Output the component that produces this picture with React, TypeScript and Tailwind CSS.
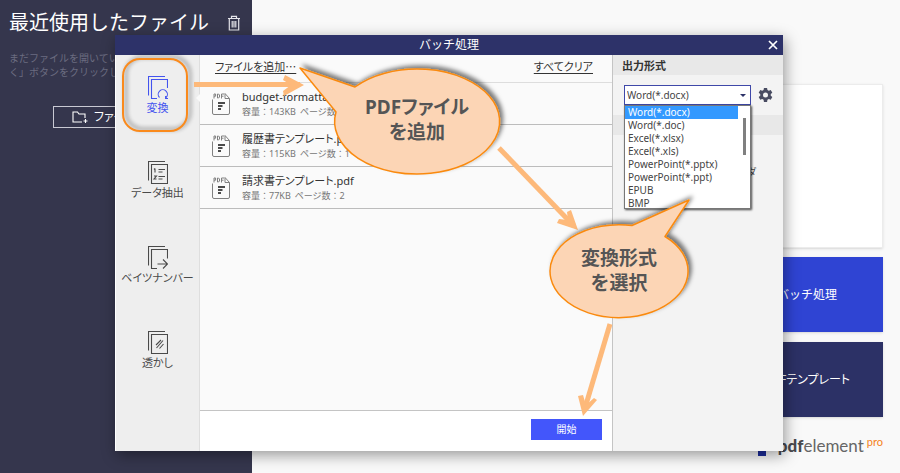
import { useState } from "react";
import type { ReactNode } from "react";

const formats = [
  "Word(*.docx)",
  "Word(*.doc)",
  "Excel(*.xlsx)",
  "Excel(*.xls)",
  "PowerPoint(*.pptx)",
  "PowerPoint(*.ppt)",
  "EPUB",
  "BMP",
];

const files = [
  { name: "budget-formattad.pdf", size: "143KB", pages: 2 },
  { name: "履歴書テンプレート.pdf", size: "115KB", pages: 1 },
  { name: "請求書テンプレート.pdf", size: "77KB", pages: 2 },
];

function PagesIcon({ front, children }: { front: string; children: ReactNode }) {
  return (
    <svg width="20" height="24" viewBox="0 0 20 24" fill="none" stroke="currentColor" strokeWidth="1.1">
      <path d="M.5 19.500V.5h16.500" />
      <path d={front} />
      {children}
    </svg>
  );
}

const tabs = [
  {
    label: "変換",
    icon: (
      <PagesIcon front="M9 22.500H3.500V3.500H19.500V12">
        <path d="M11.500 21.500a4.600 4.600 0 1 1 6.600 0M20 22.500h-2.400v-2.500" />
      </PagesIcon>
    ),
  },
  {
    label: "データ抽出",
    icon: (
      <PagesIcon front="M3.500 3.500h16v19h-16z">
        <path d="M7 7.500v4M6 8.500l1-1M6 15h2.500L6 18h2.500M10.500 8.500H17M10.500 11h4M10.500 15.500H17M10.500 18h4" />
      </PagesIcon>
    ),
  },
  {
    label: "ベイツナンバー",
    icon: (
      <PagesIcon front="M9 22.500H3.500v-19h16v9">
        <path d="M9.500 18h9.500M15 13.500l4.500 4.500-4.500 4.500" />
      </PagesIcon>
    ),
  },
  {
    label: "透かし",
    icon: (
      <PagesIcon front="M3.500 3.500h16v19h-16z">
        <path d="M8 14l5-5M8.500 17l6.500-7.500M11.500 17.500l4-4.500" />
      </PagesIcon>
    ),
  },
];

function PdfIcon() {
  return (
    <svg width="18" height="22" viewBox="0 0 18 22" fill="none" stroke="#808080" strokeWidth="1">
      <path d="M.5 6.500V20a1.500 1.500 0 0 0 1.500 1.500h14a1.500 1.500 0 0 0 1.500-1.500V5.500l-4.500-5v5h4.500" />
      <path d="M2 5.500V1h1.600v2.200H2M5.500 1v4h1l1-1V2l-1-1zM9.500 5.500V1H12M9.500 3.200h2" />
      <path d="M6 10h7M6 13h4.500M6 16h3" stroke="#4b4b4b" strokeWidth="2.200" />
    </svg>
  );
}

function Gear() {
  return (
    <svg width="15" height="15" viewBox="0 0 24 24" fill="#484b61">
      <path
        fillRule="evenodd"
        d="M9.500 0h5l.6 3.300 2.200 1.200 3.100-1.200 2.500 4.200-2.500 2.200v2.600l2.500 2.200-2.500 4.300-3.100-1.200-2.200 1.300-.6 3.300h-5l-.6-3.300-2.200-1.300-3.100 1.200-2.500-4.300 2.500-2.200V9.700L1.100 7.500l2.500-4.200 3.100 1.200 2.200-1.200zM12 7a4 4 0 1 0 0 8 4 4 0 0 0 0-8z"
      />
    </svg>
  );
}

function Home() {
  return (
    <div className="flex min-h-screen bg-[#f9f9f9]">
      <aside className="w-[252px] shrink-0 bg-[#35364d] px-[9px] pt-[9px]">
        <div className="flex items-center justify-between pr-[2px]">
          <h1 className="text-xl leading-7 text-white">最近使用したファイル</h1>
          <button type="button" aria-label="履歴を削除" className="text-[#e4e4ea]">
            <svg width="14" height="16" viewBox="0 0 14 16" fill="none" stroke="currentColor" strokeWidth="1.200">
              <path d="M1 3.500h12M4.500 3.500V1.300h5v2.200M2.300 3.500V15h9.400V3.500M5.200 6v6.500M7 6v6.500M8.800 6v6.500" />
            </svg>
          </button>
        </div>
        <p className="mt-[14px] text-[10px] leading-[14px] text-[#6b6c80]">
          まだファイルを開いていません。「ファイルを
          <br />
          く」ボタンをクリックしてください。
        </p>
        <button
          type="button"
          className="mx-auto mt-[27px] flex h-[22px] w-[146px] items-center gap-[6px] border border-[#c9c9d3] pl-[18px] text-xs text-white [font-feature-settings:'palt']"
        >
          <svg width="16" height="12" viewBox="0 0 16 12" fill="none" stroke="currentColor" strokeWidth="1.100">
            <path d="M10 11H1V1h4.500L7 3h6v4M13.500 8v4M11.500 10h4" />
          </svg>
          ファイルを開く
        </button>
      </aside>

      <main className="flex flex-1 flex-col items-end pr-[17px] pt-[84px] text-xs text-white">
        <div className="h-[164px] w-[400px] border border-[#ececec] bg-white shadow" />
        <button type="button" className="mt-[9px] h-[75px] w-[152px] bg-[#2f44d3] shadow">
          バッチ処理
        </button>
        <button
          type="button"
          className="mt-[10px] h-[75px] w-[152px] bg-[#2c3166] shadow [font-feature-settings:'palt']"
        >
          PDFテンプレート
        </button>
        <div className="mt-[19px] flex items-start font-['Lato',sans-serif] text-[#4a4a4e]">
          <span className="mr-3 mt-[12px] h-2 w-2 bg-[#1c2d9c]" />
          <span className="text-[17px] leading-[20px] text-[#666666]">
            <b className="font-black text-[#4a4a4e]">pdf</b>element
          </span>
          <span className="ml-[3px] text-[11px] leading-[12px] text-[#f58220]">pro</span>
        </div>
      </main>
    </div>
  );
}

function BatchDialog() {
  const [tab, setTab] = useState(0);
  const [format, setFormat] = useState(formats[0]);

  return (
    <div
      role="dialog"
      aria-label="バッチ処理"
      className="absolute left-[115px] right-[117px] top-[35px] shadow-[2px_4px_14px_rgba(0,0,0,0.4)]"
    >
      <header className="relative flex h-5 items-center justify-center bg-[#2d3269] text-xs text-white">
        <h2>バッチ処理</h2>
        <button type="button" aria-label="閉じる" className="absolute right-[5px] top-[5px]">
          <svg width="10" height="10" viewBox="0 0 10 10" stroke="currentColor" strokeWidth="1.700">
            <path d="M1 1l8 8M9 1l-8 8" />
          </svg>
        </button>
      </header>

      <div className="flex min-h-[396px] border-l border-white bg-[#fafafa] [font-feature-settings:'palt']">
        <nav className="flex w-[84px] shrink-0 flex-col gap-[11px] border-r border-[#dedede] bg-[#eeeeee] pt-[3px]">
          {tabs.map((t, i) => (
            <button
              key={t.label}
              type="button"
              onClick={() => setTab(i)}
              className={
                "relative flex h-[74px] flex-col items-center pt-[18px] text-[11px] leading-4 whitespace-nowrap " +
                (tab === i ? "text-[#4353ee]" : "text-[#4a4a4a]")
              }
            >
              {tab === i && (
                <>
                  <span className="absolute inset-y-0 left-[6px] w-[66px] rounded-[18px] border-2 border-[#fa8a1c] drop-shadow-[3px_-2px_2px_rgba(0,0,0,0.45)]" />
                  <span className="absolute -right-px top-[36px] border-y-4 border-r-4 border-y-transparent border-r-[#fafafa]" />
                </>
              )}
              {t.icon}
              <span>{t.label}</span>
            </button>
          ))}
        </nav>

        <section className="flex flex-1 flex-col border-r border-[#c4c4c4]">
          <div className="flex h-[28px] items-start justify-between border-b border-[#dddddd] pl-[15px] pr-[19px] pt-[3px] text-[11px] leading-4 text-[#333333]">
            <button type="button" className="font-['Noto_Sans_CJK_JP',sans-serif] underline underline-offset-2">
              ファイルを追加…
            </button>
            <button type="button" className="font-['Noto_Sans_CJK_JP',sans-serif] underline underline-offset-2">
              すべてクリア
            </button>
          </div>
          <ul className="flex-1">
            {files.map((f) => (
              <li key={f.name} className="flex h-[42px] items-center gap-3 border-b border-[#bcbcbc] pl-[12px]">
                <PdfIcon />
                <div>
                  <div className="text-[11px] leading-[15px] text-[#333333]">{f.name}</div>
                  <div className="text-[9px] leading-[15px] text-[#777777] [font-feature-settings:normal]">
                    容量：{f.size}
                    <span className="ml-1">ページ数：{f.pages}</span>
                  </div>
                </div>
              </li>
            ))}
          </ul>
          <div className="flex h-[41px] items-center justify-end border-t border-[#c4c4c4] bg-white pr-[10px]">
            <button type="button" className="mb-[3px] h-[21px] w-[71px] bg-[#4356fb] text-[10px] text-white">
              開始
            </button>
          </div>
        </section>

        <section className="w-[170px] shrink-0 bg-[#f3f3f3]">
          <label htmlFor="format" className="block h-5 bg-[#e8e8e8] pl-[9px] text-[11px] leading-[21px] font-bold text-[#333333] [font-feature-settings:normal]">
            出力形式
          </label>
          <div className="mt-[10px] flex h-[20px] items-center gap-[7px] pl-[11px]">
            <div className="relative">
              <select
                id="format"
                value={format}
                onChange={(e) => setFormat(e.target.value)}
                className="block h-[20px] w-[127px] appearance-none border border-[#3f48a8] bg-white pl-[2px] text-[10px] leading-[16px] text-[#444444]"
              >
                {formats.map((f) => (
                  <option key={f}>{f}</option>
                ))}
              </select>
              <span className="pointer-events-none absolute right-[5px] top-[9px] border-x-[3px] border-t-[3px] border-x-transparent border-t-[#2d3269]" />
              <ul
                role="listbox"
                aria-label="出力形式"
                className="absolute left-0 top-[20px] z-10 h-[104px] w-[127px] overflow-hidden border border-[#777777] bg-white text-[10px] leading-[13px] text-[#444444] shadow-[1px_1px_2px_rgba(0,0,0,0.7)]"
              >
                {formats.map((f) => (
                  <li
                    key={f}
                    role="option"
                    aria-selected={f === format}
                    onClick={() => setFormat(f)}
                    className={"mr-[12px] pl-[3px] " + (f === format ? "bg-[#3399ff] text-white" : "")}
                  >
                    {f}
                  </li>
                ))}
                <li role="presentation" className="absolute right-[4px] top-[12px] h-[37px] w-[3px] bg-[#808080]" />
              </ul>
            </div>
            <button type="button" aria-label="設定">
              <Gear />
            </button>
          </div>
          <div className="mt-[10px] h-5 bg-[#e8e8e8]" />
          <p className="mt-[29px] pr-[27px] text-right text-[10px] leading-4 text-[#444444]">フォルダ</p>
        </section>
      </div>

      <Guide />
    </div>
  );
}

// add files -> choose format -> start
function Guide() {
  return (
    <div className="pointer-events-none absolute inset-0 z-20 text-center text-[19px] leading-[25px] font-bold text-[#555555]">
      <svg className="absolute left-0 top-0" width="668" height="416" viewBox="115 35 668 416" fill="none">
        <defs>
          <filter id="lift" x="-20%" y="-20%" width="140%" height="140%">
            <feDropShadow dx="3" dy="-3" stdDeviation="2" floodColor="#000000" floodOpacity=".5" />
          </filter>
        </defs>
        <g stroke="#fdb97a" strokeWidth="5">
          <path d="M194 84.500H300" />
          <path d="M499 148l75 78" />
          <path d="M610 324l-25 84" />
        </g>
        <g fill="#fdb97a">
          <path d="M285 75L304 85L284 96L283 91L291 85L283 80Z" />
          <path d="M567 212L571 210L578 230L557 223L559 219L568 220Z" />
          <path d="M578 396L583 395L586 405L594 398L597 400L583 416Z" />
        </g>
        <g fill="#fcd5b5" stroke="#fa8a10" strokeWidth="1.500" strokeLinejoin="round">
          <path filter="url(#lift)" d="M355 87L300 68L336 112A82.500 52.500 0 1 0 355 87Z" />
          <path filter="url(#lift)" d="M632 225.500L689 200L665 236.500A69 46.500 0 1 1 632 225.500Z" />
        </g>
      </svg>
      <p className="absolute left-[219px] top-[60px] w-[166px] [font-feature-settings:'palt']">
        PDFファイル
        <br />
        を追加
      </p>
      <p className="absolute left-[435px] top-[211px] w-[138px]">
        変換形式
        <br />
        を選択
      </p>
    </div>
  );
}

export default function App() {
  return (
    <div className="relative min-h-screen overflow-hidden font-['Noto_Sans','Noto_Sans_CJK_JP',sans-serif]">
      <Home />
      <BatchDialog />
    </div>
  );
}
